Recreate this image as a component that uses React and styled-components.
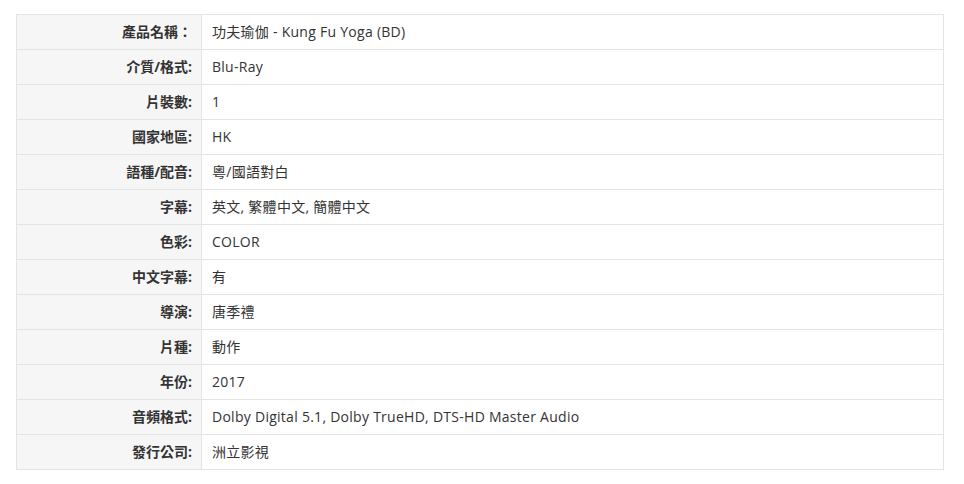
import React from 'react';
import styled, { createGlobalStyle } from 'styled-components';

const Global = createGlobalStyle`
  body {
    margin: 0;
    background: #fff;
    font-family: "Open Sans", "Noto Sans CJK TC", sans-serif;
  }
`;

const Wrap = styled.div`
  padding: 14px 20px 0 16px;
`;

const Table = styled.table`
  width: 928px;
  border-collapse: collapse;
  font-size: 14px;
  color: #333;
`;

const Row = styled.tr`
  height: 35px;
`;

const Label = styled.th`
  width: 185px;
  box-sizing: border-box;
  background: #f6f6f6;
  border: 1px solid #e4e4e4;
  text-align: right;
  font-weight: bold;
  padding: 0 9px 2px 8px;
  color: #333;
`;

const Value = styled.td`
  border: 1px solid #e4e4e4;
  padding: 0 10px 2px;
  letter-spacing: 0.27px;
  color: #333;
`;

const rows = [
  ['產品名稱：', '功夫瑜伽 - Kung Fu Yoga (BD)'],
  ['介質/格式:', 'Blu-Ray'],
  ['片裝數:', '1'],
  ['國家地區:', 'HK'],
  ['語種/配音:', '粵/國語對白'],
  ['字幕:', '英文, 繁體中文, 簡體中文'],
  ['色彩:', 'COLOR'],
  ['中文字幕:', '有'],
  ['導演:', '唐季禮'],
  ['片種:', '動作'],
  ['年份:', '2017'],
  ['音頻格式:', 'Dolby Digital 5.1, Dolby TrueHD, DTS-HD Master Audio'],
  ['發行公司:', '洲立影視'],
];

export default function App() {
  return (
    <Wrap>
      <Global />
      <Table>
        <tbody>
          {rows.map(([k, v]) => (
            <Row key={k}>
              <Label>{k}</Label>
              <Value>{v}</Value>
            </Row>
          ))}
        </tbody>
      </Table>
    </Wrap>
  );
}
